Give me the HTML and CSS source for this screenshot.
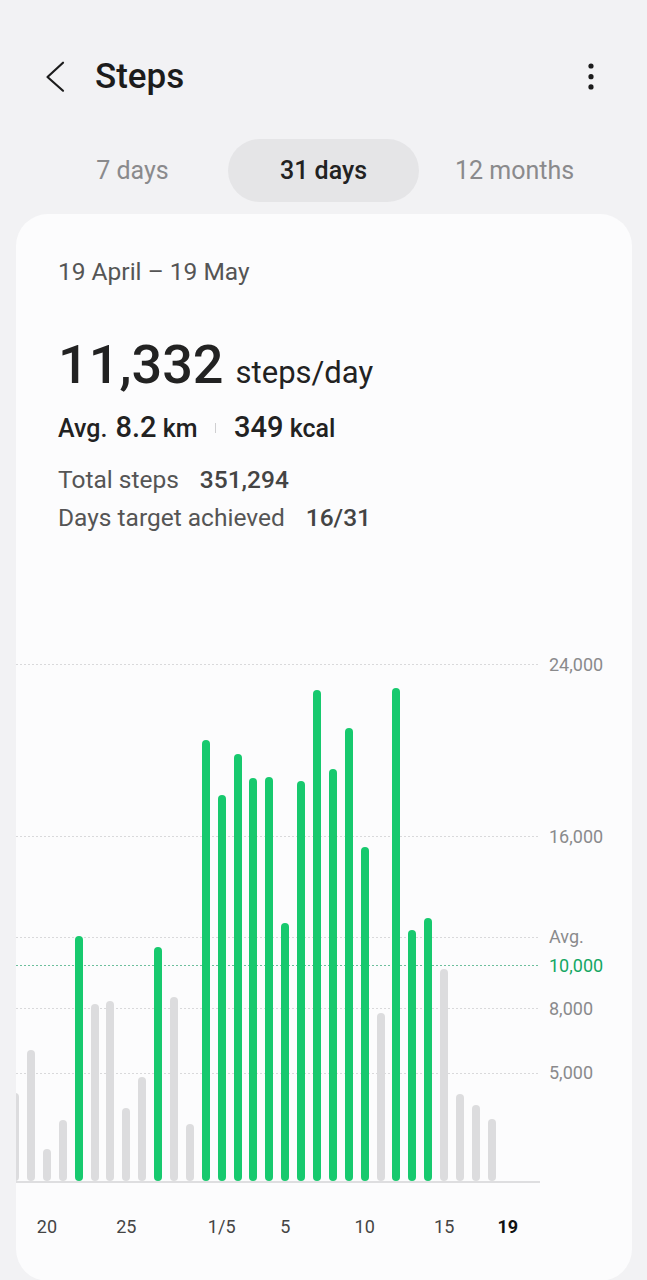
FILE: index.html
```html
<!DOCTYPE html>
<html lang="en">
<head>
    <meta charset="UTF-8">
    <meta name="viewport" content="width=device-width, initial-scale=1.0">
    <title>Steps</title>
    <link rel="stylesheet" href="styles.css">
</head>
<body>

    <!-- App bar -->
    <div class="app-bar">
        <svg class="back-icon" width="24" height="32" viewBox="0 0 24 32">
            <path d="M19 1.7 L3.5 16 L19 29.7" fill="none" stroke="#1c1c1c" stroke-width="2.2" stroke-linecap="round" stroke-linejoin="round"/>
        </svg>
        <h1 class="title">Steps</h1>
        <svg class="more-icon" width="24" height="32" viewBox="0 0 24 32">
            <circle cx="12" cy="5" r="2.6" fill="#1c1c1c"/>
            <circle cx="12" cy="15.7" r="2.6" fill="#1c1c1c"/>
            <circle cx="12" cy="25.9" r="2.6" fill="#1c1c1c"/>
        </svg>
    </div>

    <!-- Period tabs -->
    <div class="tabs">
        <div class="tab">7 days</div>
        <div class="tab active">31 days</div>
        <div class="tab">12 months</div>
    </div>

    <!-- Summary card -->
    <div class="card">
        <div class="summary">
            <div class="range">19 April – 19 May</div>
            <div class="headline">
                <span class="big-number">11,332</span>
                <span class="unit">steps/day</span>
            </div>
            <div class="avg-row">
                <span class="label-strong">Avg.</span>
                <span class="num">8.2</span>
                <span class="label-strong">km</span>
                <span class="divider"></span>
                <span class="num">349</span>
                <span class="label-strong">kcal</span>
            </div>
            <div class="stats">
                <div class="stat"><span class="stat-label">Total steps</span><span class="stat-value">351,294</span></div>
                <div class="stat"><span class="stat-label">Days target achieved</span><span class="stat-value">16/31</span></div>
            </div>
        </div>

        <!-- Chart -->
        <div class="chart">
            <div class="chart-area">
                <div class="grid-line" style="--v: 24000"><span class="dots"></span><span class="axis-label">24,000</span></div>
                <div class="grid-line" style="--v: 16000"><span class="dots"></span><span class="axis-label">16,000</span></div>
                <div class="grid-line" style="--v: 11332"><span class="dots"></span><span class="axis-label">Avg.</span></div>
                <div class="grid-line target" style="--v: 10000"><span class="dots"></span><span class="axis-label">10,000</span></div>
                <div class="grid-line" style="--v: 8000"><span class="dots"></span><span class="axis-label">8,000</span></div>
                <div class="grid-line" style="--v: 5000"><span class="dots"></span><span class="axis-label">5,000</span></div>

                <div class="plot">
                    <div class="bars">
                        <span class="bar" style="--v: 4093"></span>
                        <span class="bar" style="--v: 6093"></span>
                        <span class="bar" style="--v: 1488"></span>
                        <span class="bar" style="--v: 2837"></span>
                        <span class="bar hit" style="--v: 11395"></span>
                        <span class="bar" style="--v: 8233"></span>
                        <span class="bar" style="--v: 8372"></span>
                        <span class="bar" style="--v: 3395"></span>
                        <span class="bar" style="--v: 4837"></span>
                        <span class="bar hit" style="--v: 10884"></span>
                        <span class="bar" style="--v: 8558"></span>
                        <span class="bar" style="--v: 2651"></span>
                        <span class="bar hit" style="--v: 20512"></span>
                        <span class="bar hit" style="--v: 17953"></span>
                        <span class="bar hit" style="--v: 19860"></span>
                        <span class="bar hit" style="--v: 18744"></span>
                        <span class="bar hit" style="--v: 18791"></span>
                        <span class="bar hit" style="--v: 12000"></span>
                        <span class="bar hit" style="--v: 18605"></span>
                        <span class="bar hit" style="--v: 22837"></span>
                        <span class="bar hit" style="--v: 19163"></span>
                        <span class="bar hit" style="--v: 21070"></span>
                        <span class="bar hit" style="--v: 15535"></span>
                        <span class="bar" style="--v: 7814"></span>
                        <span class="bar hit" style="--v: 22930"></span>
                        <span class="bar hit" style="--v: 11674"></span>
                        <span class="bar hit" style="--v: 12233"></span>
                        <span class="bar" style="--v: 9860"></span>
                        <span class="bar" style="--v: 4047"></span>
                        <span class="bar" style="--v: 3535"></span>
                        <span class="bar" style="--v: 2884"></span>
                        <span class="bar" style="--v: 0"></span>
                    </div>
                </div>
            </div>

            <div class="days">
                <span></span><span></span><span>20</span><span></span>
                <span></span><span></span><span></span><span>25</span>
                <span></span><span></span><span></span><span></span>
                <span></span><span>1/5</span><span></span><span></span>
                <span></span><span>5</span><span></span><span></span>
                <span></span><span></span><span>10</span><span></span>
                <span></span><span></span><span></span><span>15</span>
                <span></span><span></span><span></span><span class="today">19</span>
            </div>
        </div>
    </div>

</body>
</html>
```

FILE: styles.css
```css
/* General styles */
body {
    font-family: Roboto, "Noto Sans", sans-serif;
    margin: 0;
    padding: 0;
    background-color: #f2f2f4;
    color: #1c1c1c;
}

/* App bar */
.app-bar {
    display: flex;
    align-items: center;
    height: 56px;
    padding: 49px 44px 0 44px;
}

.back-icon {
    flex: none;
    margin-right: 27px;
}

.title {
    flex: 1;
    margin: 0;
    font-size: 35px;
    font-weight: 500;
    line-height: 56px;
}

.more-icon {
    flex: none;
}

/* Tabs */
.tabs {
    display: grid;
    grid-template-columns: repeat(3, 191px);
    justify-content: center;
    margin-top: 34px;
}

.tab {
    height: 63px;
    line-height: 63px;
    text-align: center;
    font-size: 25px;
    color: #8a8a8c;
    border-radius: 32px;
}

.tab.active {
    background-color: #e5e5e7;
    color: #222;
    font-weight: 500;
}

/* Card */
.card {
    margin: 12px 15px 0 16px;
    padding: 42px 0 42px 0;
    background-color: #fcfcfd;
    border-radius: 32px;
}

.summary {
    padding-left: 42px;
}

.range {
    font-size: 24.5px;
    line-height: 32px;
    color: #555;
}

.headline {
    display: flex;
    align-items: baseline;
    margin-top: 45px;
    height: 64px;
}

.big-number {
    font-size: 54px;
    font-weight: 500;
    line-height: 64px;
    color: #222;
}

.unit {
    margin-left: 12px;
    font-size: 31px;
    color: #222;
}

.avg-row {
    margin-top: 12px;
    font-size: 25px;
    line-height: 36px;
    color: #222;
}

.label-strong {
    font-weight: 500;
}

.num {
    font-size: 29px;
    font-weight: 500;
    margin-left: 2px;
}

.divider {
    display: inline-block;
    width: 1px;
    height: 10px;
    margin: 0 10px 0 11px;
    background-color: #cfcfd1;
    vertical-align: 4px;
}

.stats {
    margin-top: 14px;
}

.stat {
    font-size: 24.5px;
    line-height: 38.4px;
    color: #555;
}

.stat-label {
    margin-right: 21px;
}

.stat-value {
    font-weight: 500;
    color: #444;
}

/* Chart */
.chart {
    margin-top: 103px;
}

.chart-area {
    position: relative;
    height: 542px;
}

.grid-line {
    position: absolute;
    left: 0;
    bottom: calc(var(--v) * 0.0215px + 2px);
    height: 0;
    display: flex;
    align-items: center;
}

.dots {
    width: 524px;
    height: 1px;
    background-image: linear-gradient(to right, #d9d9db 2px, transparent 2px);
    background-size: 4px 1px;
}

.axis-label {
    margin-left: 9px;
    font-size: 18px;
    line-height: 24px;
    color: #8a8a8c;
    white-space: nowrap;
}

.grid-line.target .dots {
    background-image: linear-gradient(to right, #6cbf9c 2px, transparent 2px);
}

.grid-line.target .axis-label {
    color: #14a763;
}

.plot {
    position: relative;
    width: 524px;
    height: 540px;
    border-bottom: 2px solid #dedee0;
    overflow: hidden;
}

.bars,
.days {
    display: grid;
    grid-template-columns: repeat(32, 15.9px);
    justify-items: center;
    margin-left: -8.85px;
}

.bars {
    height: 100%;
    align-items: end;
}

.bar {
    width: 8px;
    height: calc(var(--v) * 0.0215px);
    border-radius: 4px;
    background-color: #dcdcde;
}

.bar.hit {
    background-color: #17c96e;
}

.days {
    margin-top: 32px;
    font-size: 18px;
    line-height: 24px;
    color: #444;
}

.days span {
    white-space: nowrap;
}

.days .today {
    font-weight: 700;
    color: #111;
}
```
